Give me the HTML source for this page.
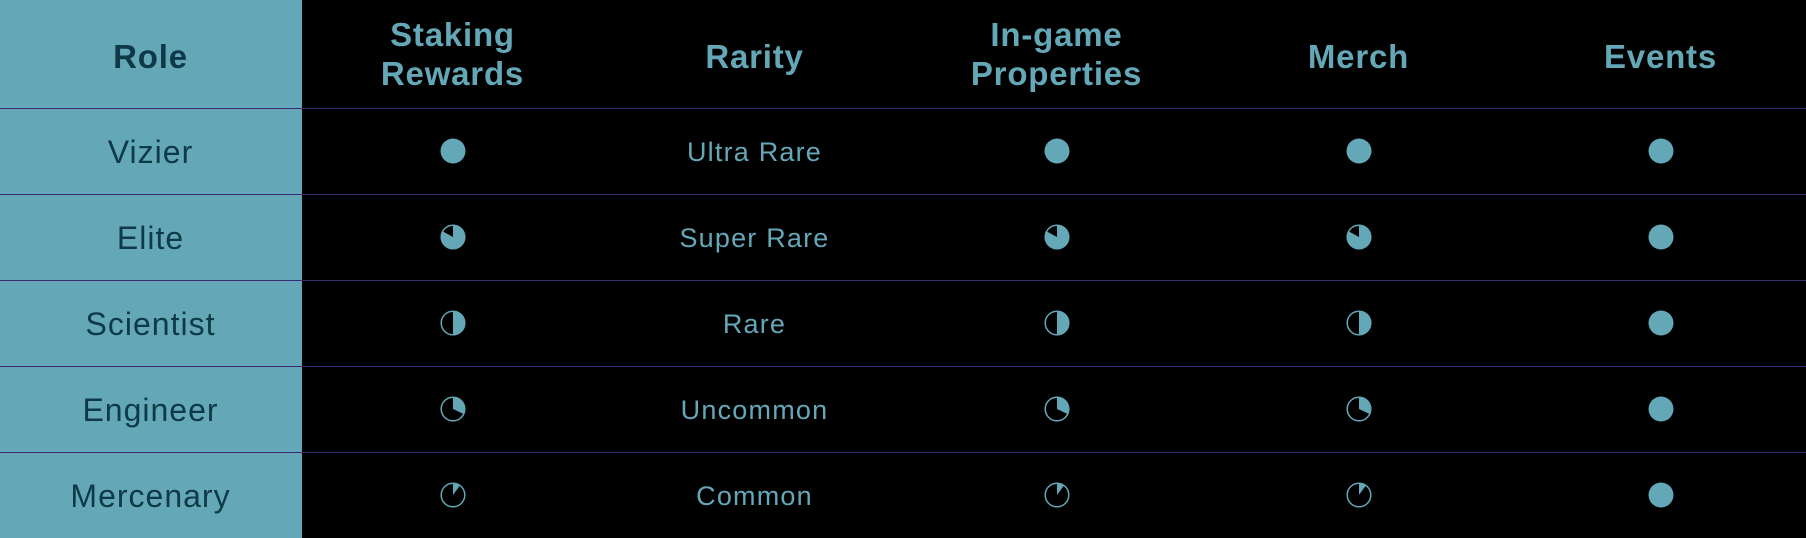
<!DOCTYPE html>
<html><head><meta charset="utf-8"><style>
html,body{margin:0;padding:0;background:#000;width:1806px;height:538px;overflow:hidden}
body{font-family:"Liberation Sans",sans-serif;position:relative}
.teal{position:absolute;left:0;top:0;width:302px;height:538px;background:#64a8b8}
.line{position:absolute;left:0;width:1806px;height:1px;background:#3b2a72}
.c{position:absolute;display:flex;align-items:center;justify-content:center;text-align:center;width:301px;white-space:nowrap}
.h{font-weight:bold;font-size:33px;line-height:39px;color:#64a8b8;letter-spacing:0.8px}
.h.r{color:#0e3a48}
.n{font-size:32px;color:#0e3a48;letter-spacing:1px}
.t{font-size:27px;color:#64a8b8;letter-spacing:1.2px}
svg{display:block}
</style></head><body>
<div class="teal"></div>
<div class="line" style="top:108px"></div>
<div class="line" style="top:194px"></div>
<div class="line" style="top:280px"></div>
<div class="line" style="top:366px"></div>
<div class="line" style="top:452px"></div>

<div class="c h r" style="left:0;top:0;height:112px">Role</div>
<div class="c h" style="left:302px;top:0;height:108px">Staking<br>Rewards</div>
<div class="c h" style="left:604px;top:0;height:112px">Rarity</div>
<div class="c h" style="left:906px;top:0;height:108px">In-game<br>Properties</div>
<div class="c h" style="left:1208px;top:0;height:112px">Merch</div>
<div class="c h" style="left:1510px;top:0;height:112px">Events</div>

<div id="rows"></div>
<script>
var full='<svg width="26" height="26"><circle cx="13" cy="13" r="12.5" fill="#64a8b8"/></svg>';
function pie(d){return '<svg width="26" height="26"><circle cx="13" cy="13" r="11.8" fill="none" stroke="#64a8b8" stroke-width="1.5"/><path d="'+d+'" fill="#64a8b8"/></svg>';}
var elite=pie('M13 13 L13 1 A12 12 0 1 1 2.49 7.22 Z');
var half=pie('M13 1 A12 12 0 0 1 13 25 Z');
var eng=pie('M13 13 L13 1 A12 12 0 0 1 23.86 18.11 Z');
var merc=pie('M13 13 L13 1 A12 12 0 0 1 20.05 3.29 Z');
var rows=[["Vizier","Ultra Rare",full,full],["Elite","Super Rare",elite,full],["Scientist","Rare",half,full],["Engineer","Uncommon",eng,full],["Mercenary","Common",merc,full]];
var h='';
rows.forEach(function(r,i){var top=108+i*86,ht=86;
h+='<div class="c n" style="left:0;top:'+(top+1)+'px;height:'+ht+'px">'+r[0]+'</div>';
h+='<div class="c" style="left:302px;top:'+(top)+'px;height:'+ht+'px">'+r[2]+'</div>';
h+='<div class="c t" style="left:604px;top:'+(top+1)+'px;height:'+ht+'px">'+r[1]+'</div>';
h+='<div class="c" style="left:906px;top:'+(top)+'px;height:'+ht+'px">'+r[2]+'</div>';
h+='<div class="c" style="left:1208px;top:'+(top)+'px;height:'+ht+'px">'+r[2]+'</div>';
h+='<div class="c" style="left:1510px;top:'+(top)+'px;height:'+ht+'px">'+r[3]+'</div>';
});
document.getElementById('rows').innerHTML=h;
</script>
</body></html>
